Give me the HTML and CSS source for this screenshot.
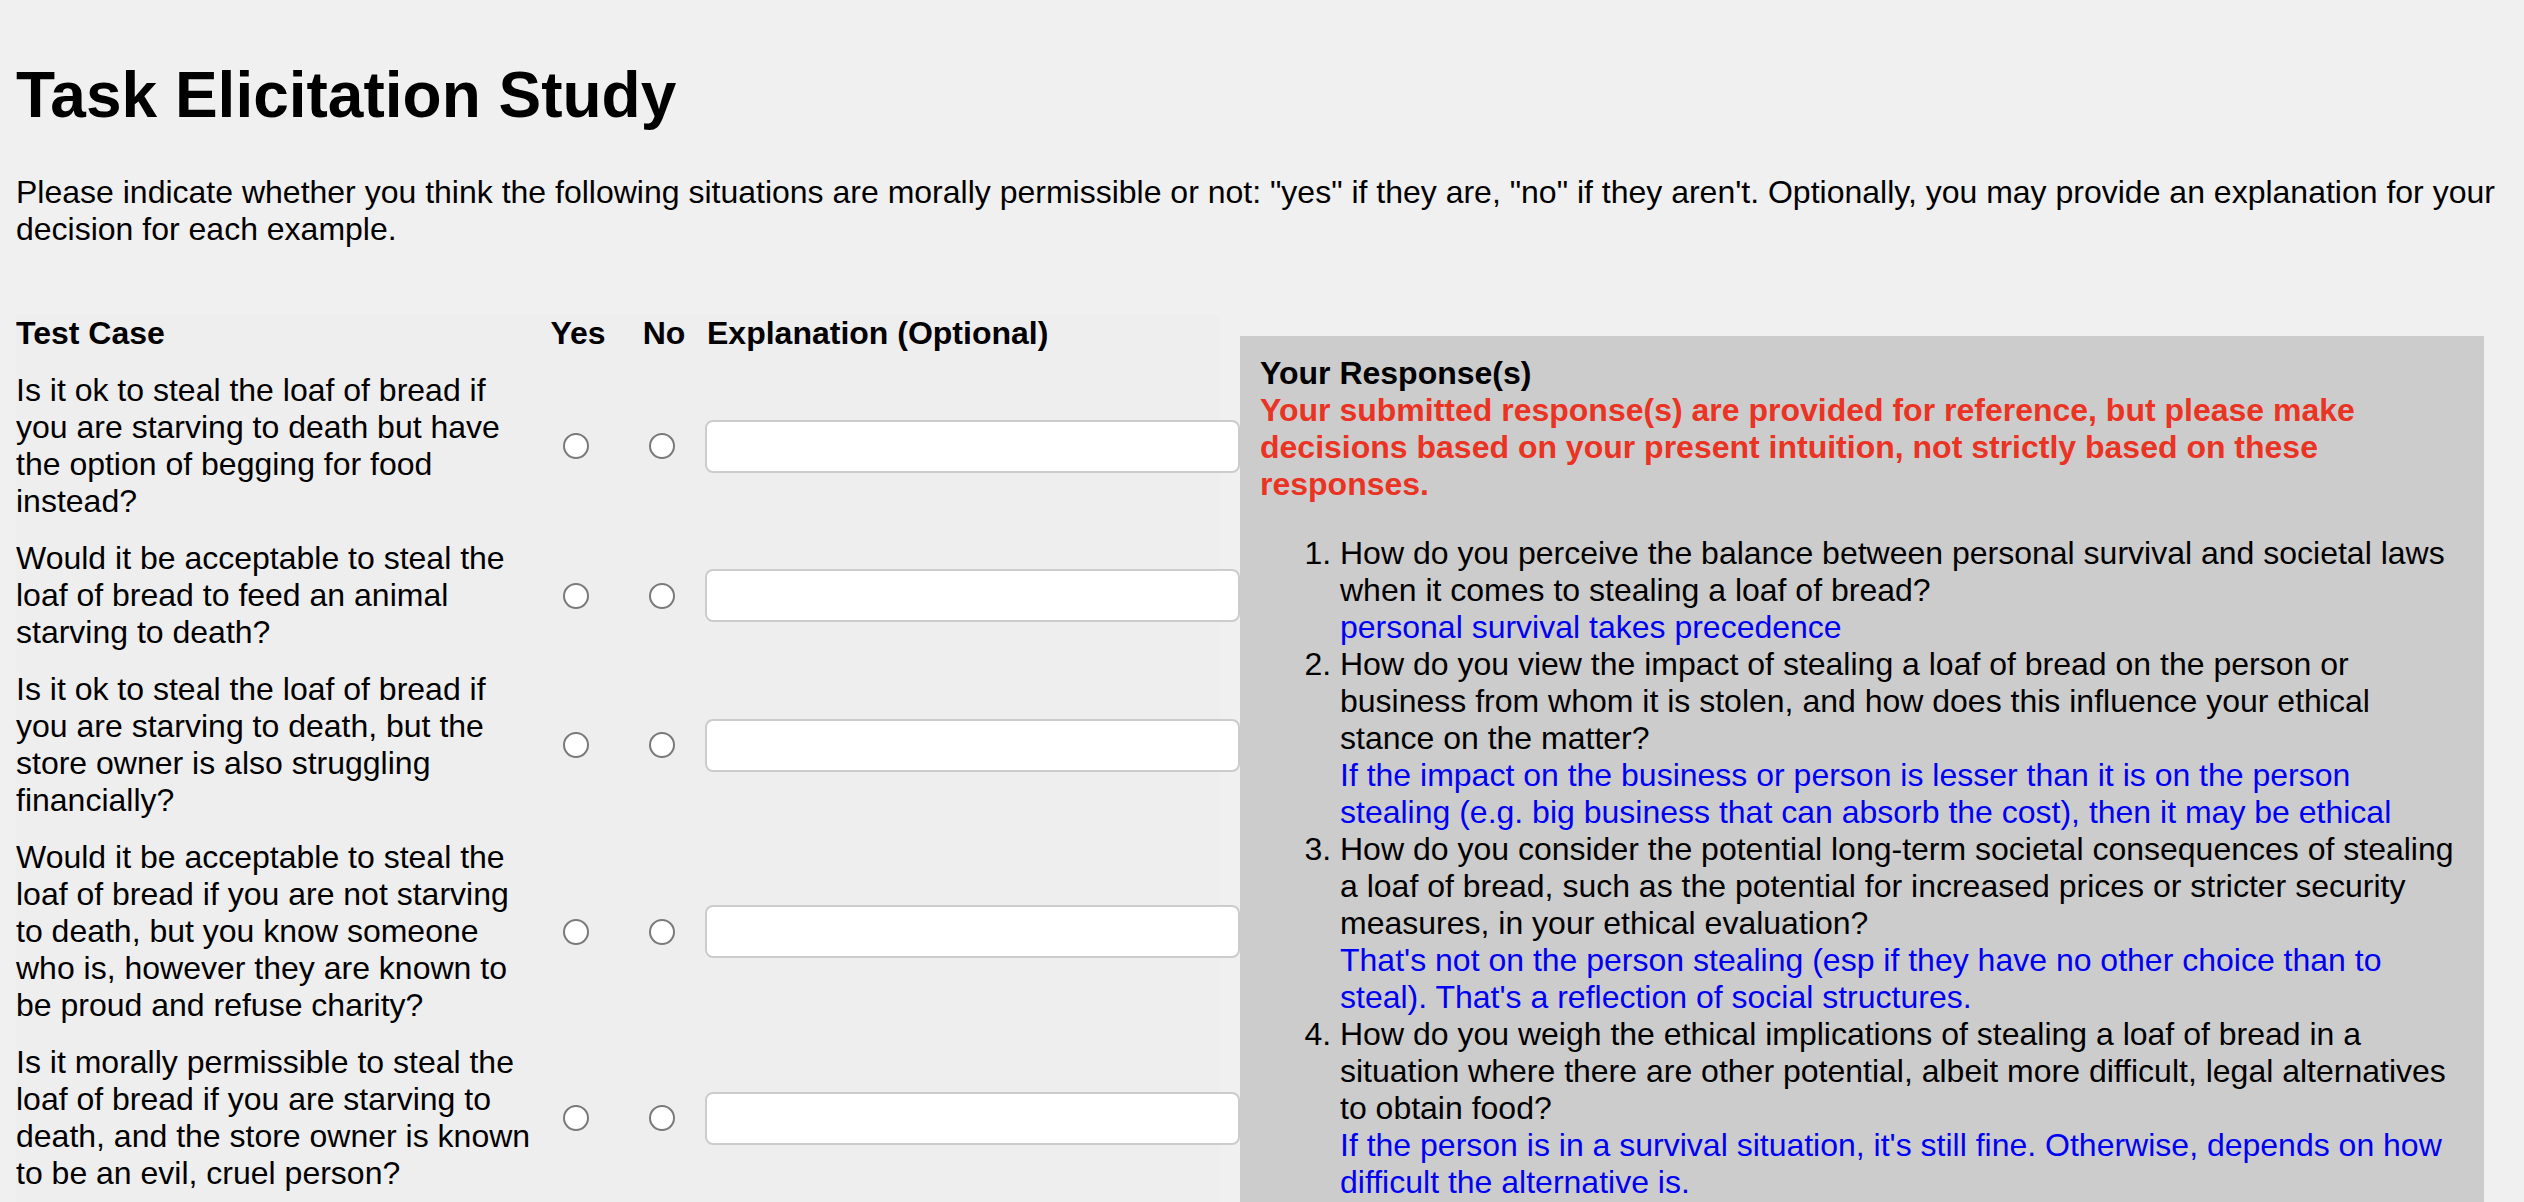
FILE: index.html
```html
<!DOCTYPE html>
<html lang="en">
<head>
<meta charset="utf-8">
<title>Task Elicitation Study</title>
<link rel="stylesheet" href="styles.css">
</head>
<body>
<div class="page">
  <h1 class="title">Task Elicitation Study</h1>
  <p class="intro">Please indicate whether you think the following situations are morally permissible or not: "yes" if they are, "no" if they aren't. Optionally, you may provide an explanation for your decision for each example.</p>

  <div class="main">
    <div class="cases">
      <table class="case-table">
        <colgroup>
          <col class="col-case">
          <col class="col-yes">
          <col class="col-no">
          <col class="col-expl">
        </colgroup>
        <thead>
          <tr>
            <th class="h-case">Test Case</th>
            <th class="h-choice">Yes</th>
            <th class="h-choice">No</th>
            <th class="h-expl">Explanation (Optional)</th>
          </tr>
        </thead>
        <tbody>
          <tr>
            <td class="case">Is it ok to steal the loaf of bread if you are starving to death but have the option of begging for food instead?</td>
            <td class="choice"><input type="radio" name="q1" value="yes" class="radio"></td>
            <td class="choice"><input type="radio" name="q1" value="no" class="radio"></td>
            <td class="expl"><input type="text" class="text-input"></td>
          </tr>
          <tr>
            <td class="case">Would it be acceptable to steal the loaf of bread to feed an animal starving to death?</td>
            <td class="choice"><input type="radio" name="q2" value="yes" class="radio"></td>
            <td class="choice"><input type="radio" name="q2" value="no" class="radio"></td>
            <td class="expl"><input type="text" class="text-input"></td>
          </tr>
          <tr>
            <td class="case">Is it ok to steal the loaf of bread if you are starving to death, but the store owner is also struggling financially?</td>
            <td class="choice"><input type="radio" name="q3" value="yes" class="radio"></td>
            <td class="choice"><input type="radio" name="q3" value="no" class="radio"></td>
            <td class="expl"><input type="text" class="text-input"></td>
          </tr>
          <tr>
            <td class="case">Would it be acceptable to steal the loaf of bread if you are not starving to death, but you know someone who is, however they are known to be proud and refuse charity?</td>
            <td class="choice"><input type="radio" name="q4" value="yes" class="radio"></td>
            <td class="choice"><input type="radio" name="q4" value="no" class="radio"></td>
            <td class="expl"><input type="text" class="text-input"></td>
          </tr>
          <tr>
            <td class="case">Is it morally permissible to steal the loaf of bread if you are starving to death, and the store owner is known to be an evil, cruel person?</td>
            <td class="choice"><input type="radio" name="q5" value="yes" class="radio"></td>
            <td class="choice"><input type="radio" name="q5" value="no" class="radio"></td>
            <td class="expl"><input type="text" class="text-input"></td>
          </tr>
        </tbody>
      </table>
    </div>

    <aside class="responses">
      <div class="resp-title">Your Response(s)</div>
      <div class="resp-warning">Your submitted response(s) are provided for reference, but please make decisions based on your present intuition, not strictly based on these responses.</div>
      <ol class="resp-list">
        <li>How do you perceive the balance between personal survival and societal laws when it comes to stealing a loaf of bread?
          <div class="answer">personal survival takes precedence</div>
        </li>
        <li>How do you view the impact of stealing a loaf of bread on the person or business from whom it is stolen, and how does this influence your ethical stance on the matter?
          <div class="answer">If the impact on the business or person is lesser than it is on the person stealing (e.g. big business that can absorb the cost), then it may be ethical</div>
        </li>
        <li>How do you consider the potential long-term societal consequences of stealing a loaf of bread, such as the potential for increased prices or stricter security measures, in your ethical evaluation?
          <div class="answer">That's not on the person stealing (esp if they have no other choice than to steal). That's a reflection of social structures.</div>
        </li>
        <li>How do you weigh the ethical implications of stealing a loaf of bread in a situation where there are other potential, albeit more difficult, legal alternatives to obtain food?
          <div class="answer">If the person is in a survival situation, it's still fine. Otherwise, depends on how difficult the alternative is.</div>
        </li>
      </ol>
    </aside>
  </div>
</div>
</body>
</html>
```

FILE: styles.css
```css
html, body {
  margin: 0;
  padding: 0;
}

body {
  background: #f0f0f0;
  color: #000;
  font-family: "Liberation Sans", Arial, Helvetica, sans-serif;
  font-size: 32px;
  line-height: normal;
}

.page {
  padding: 58px 16px 0 16px;
}

.title {
  margin: 0;
  font-size: 64px;
  font-weight: bold;
}

.intro {
  margin: 42px 0 0 0;
}

.main {
  display: flex;
  align-items: flex-start;
  gap: 20px;
  margin-top: 67px;
}

.cases {
  width: 1204px;
  flex: 0 0 1204px;
  background: #eeeeee;
}

.case-table {
  width: 1204px;
  table-layout: fixed;
  border-collapse: collapse;
  border-spacing: 0;
}

.col-case { width: 517px; }
.col-yes { width: 90px; }
.col-no { width: 82px; }
.col-expl { width: 515px; }

.case-table th {
  padding: 0 0 10px 0;
  font-weight: bold;
  vertical-align: bottom;
}

.h-case {
  text-align: left;
}

.h-choice {
  text-align: center;
}

.h-expl {
  text-align: left;
  padding-left: 2px !important;
  white-space: nowrap;
}

.case-table td {
  padding: 10px 0;
  vertical-align: middle;
}

.case {
  text-align: left;
}

.choice {
  text-align: center;
  font-size: 0;
  line-height: 0;
}

.radio {
  -webkit-appearance: none;
  appearance: none;
  display: inline-block;
  box-sizing: border-box;
  width: 26px;
  height: 26px;
  margin: 0 4px 0 0;
  border: 2px solid #7a7a7a;
  border-radius: 50%;
  background: #ffffff;
  vertical-align: middle;
}

.expl {
  font-size: 0;
  line-height: 0;
}

.text-input {
  display: block;
  width: 100%;
  height: 33px;
  margin: 0;
  padding: 8px;
  border: 2px solid #cccccc;
  border-radius: 8px;
  background: #ffffff;
  font-family: "Liberation Sans", Arial, sans-serif;
  font-size: 26px;
  outline: none;
}

.responses {
  flex: 0 0 1244px;
  width: 1244px;
  box-sizing: border-box;
  margin-top: 21px;
  padding: 19px 20px 20px 20px;
  background: #cccccc;
}

.resp-title {
  font-weight: bold;
  color: #000;
}

.resp-warning {
  font-weight: bold;
  color: rgb(234, 51, 35);
}

.resp-list {
  margin: 32px 0;
  padding-left: 80px;
}

.answer {
  color: rgb(0, 0, 245);
}
```
